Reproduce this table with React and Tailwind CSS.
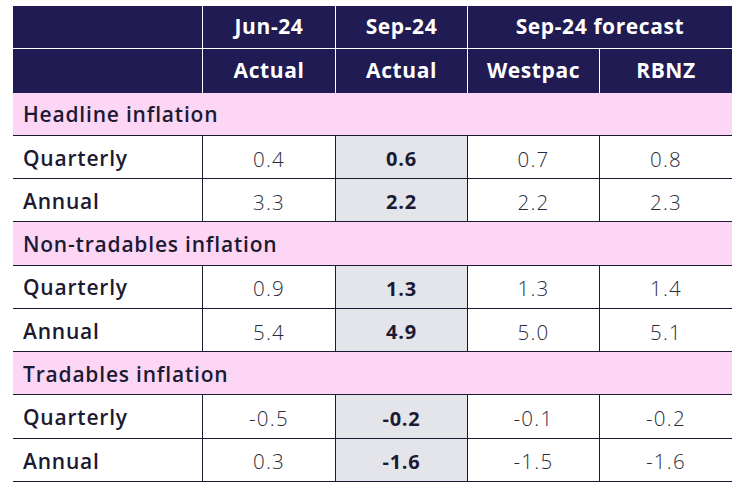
import React from "react";

const sections = [
  {
    title: "Headline inflation",
    rows: [
      ["Quarterly", "0.4", "0.6", "0.7", "0.8"],
      ["Annual", "3.3", "2.2", "2.2", "2.3"],
    ],
  },
  {
    title: "Non-tradables inflation",
    rows: [
      ["Quarterly", "0.9", "1.3", "1.3", "1.4"],
      ["Annual", "5.4", "4.9", "5.0", "5.1"],
    ],
  },
  {
    title: "Tradables inflation",
    rows: [
      ["Quarterly", "-0.5", "-0.2", "-0.1", "-0.2"],
      ["Annual", "0.3", "-1.6", "-1.5", "-1.6"],
    ],
  },
];

const os = { fontFamily: '"Open Sans", sans-serif' };

export default function App() {
  const head = "bg-[#201b52] border-l border-white text-white font-bold text-[21px] tracking-[0.6px] flex items-center justify-center";
  const val = "border-b border-l border-[#1c1a33] flex items-center justify-center pt-[4px] text-[20.5px] font-light text-[#2b2b3a] tracking-[1.3px]";
  const label = "flex items-center pl-[10px] pt-[3px] text-[21px] font-semibold tracking-[0.8px]";
  return (
    <div className="bg-white w-[744px] h-[498px] pl-[13px] pt-[6px]" style={os}>
      <div className="grid w-[719px] grid-cols-[189px_133px_132px_132px_133px] auto-rows-[43.27px] text-[#1c1a33]">
        {/* header row 1 */}
        <div className="bg-[#201b52] border-b border-white"></div>
        <div className={head + " border-b"}>Jun-24</div>
        <div className={head + " border-b"}>Sep-24</div>
        <div className={head + " border-b col-span-2"}>Sep-24 forecast</div>
        {/* header row 2 */}
        <div className="bg-[#201b52]"></div>
        <div className={head}>Actual</div>
        <div className={head}>Actual</div>
        <div className={head}>Westpac</div>
        <div className={head}>RBNZ</div>
        {sections.map((s) => (
          <React.Fragment key={s.title}>
            <div className={"col-span-5 bg-[#fdd6f6] border-b border-[#1c1a33] " + label}>{s.title}</div>
            {s.rows.map((r) => (
              <React.Fragment key={r[0]}>
                <div className={"border-b border-[#1c1a33] " + label}>{r[0]}</div>
                <div className={val}>{r[1]}</div>
                <div className="border-b border-l border-[#1c1a33] bg-[#e4e5ea] flex items-center justify-center pt-[4px] text-[20px] font-bold tracking-[0.8px]">{r[2]}</div>
                <div className={val}>{r[3]}</div>
                <div className={val}>{r[4]}</div>
              </React.Fragment>
            ))}
          </React.Fragment>
        ))}
      </div>
    </div>
  );
}
